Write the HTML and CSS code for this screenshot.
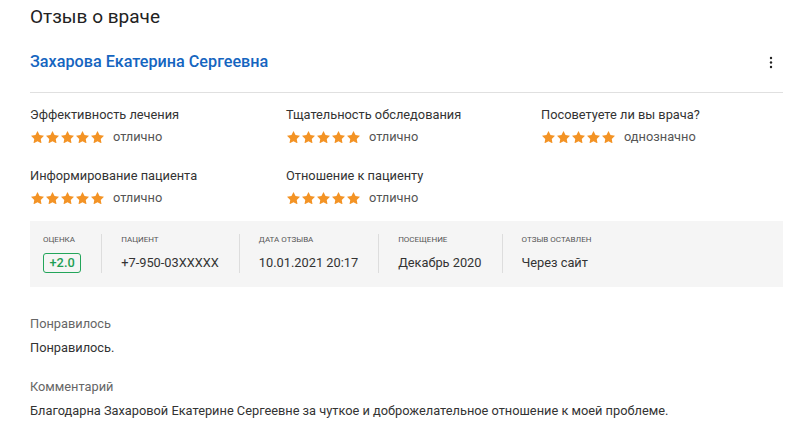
FILE: index.html
```html
<!DOCTYPE html>
<html lang="ru">
<head>
<meta charset="utf-8">
<link rel="stylesheet" href="styles.css">
</head>
<body>
<div class="page">
  <h1 class="title">Отзыв о враче</h1>
  <div class="doctor-row">
    <a class="doctor-name" href="#">Захарова Екатерина Сергеевна</a>
    <span class="kebab">
      <svg width="4" height="14" viewBox="0 0 4 14"><circle cx="2" cy="2" r="1.2" fill="#222"/><circle cx="2" cy="6.5" r="1.2" fill="#222"/><circle cx="2" cy="11" r="1.2" fill="#222"/></svg>
    </span>
  </div>
  <div class="divider"></div>

  <div class="ratings">
    <div class="rating">
      <div class="rating-label">Эффективность лечения</div>
      <div class="rating-value"><span class="stars">
        <svg class="star" viewBox="2 2 20 19"><path d="M12 2l3.09 6.26L22 9.27l-5 4.87 1.18 6.88L12 17.77l-6.18 3.25L7 14.14 2 9.27l6.91-1.01L12 2z"/></svg><svg class="star" viewBox="2 2 20 19"><path d="M12 2l3.09 6.26L22 9.27l-5 4.87 1.18 6.88L12 17.77l-6.18 3.25L7 14.14 2 9.27l6.91-1.01L12 2z"/></svg><svg class="star" viewBox="2 2 20 19"><path d="M12 2l3.09 6.26L22 9.27l-5 4.87 1.18 6.88L12 17.77l-6.18 3.25L7 14.14 2 9.27l6.91-1.01L12 2z"/></svg><svg class="star" viewBox="2 2 20 19"><path d="M12 2l3.09 6.26L22 9.27l-5 4.87 1.18 6.88L12 17.77l-6.18 3.25L7 14.14 2 9.27l6.91-1.01L12 2z"/></svg><svg class="star" viewBox="2 2 20 19"><path d="M12 2l3.09 6.26L22 9.27l-5 4.87 1.18 6.88L12 17.77l-6.18 3.25L7 14.14 2 9.27l6.91-1.01L12 2z"/></svg>
      </span><span class="rating-text">отлично</span></div>
    </div>
    <div class="rating">
      <div class="rating-label">Тщательность обследования</div>
      <div class="rating-value"><span class="stars">
        <svg class="star" viewBox="2 2 20 19"><path d="M12 2l3.09 6.26L22 9.27l-5 4.87 1.18 6.88L12 17.77l-6.18 3.25L7 14.14 2 9.27l6.91-1.01L12 2z"/></svg><svg class="star" viewBox="2 2 20 19"><path d="M12 2l3.09 6.26L22 9.27l-5 4.87 1.18 6.88L12 17.77l-6.18 3.25L7 14.14 2 9.27l6.91-1.01L12 2z"/></svg><svg class="star" viewBox="2 2 20 19"><path d="M12 2l3.09 6.26L22 9.27l-5 4.87 1.18 6.88L12 17.77l-6.18 3.25L7 14.14 2 9.27l6.91-1.01L12 2z"/></svg><svg class="star" viewBox="2 2 20 19"><path d="M12 2l3.09 6.26L22 9.27l-5 4.87 1.18 6.88L12 17.77l-6.18 3.25L7 14.14 2 9.27l6.91-1.01L12 2z"/></svg><svg class="star" viewBox="2 2 20 19"><path d="M12 2l3.09 6.26L22 9.27l-5 4.87 1.18 6.88L12 17.77l-6.18 3.25L7 14.14 2 9.27l6.91-1.01L12 2z"/></svg>
      </span><span class="rating-text">отлично</span></div>
    </div>
    <div class="rating">
      <div class="rating-label">Посоветуете ли вы врача?</div>
      <div class="rating-value"><span class="stars">
        <svg class="star" viewBox="2 2 20 19"><path d="M12 2l3.09 6.26L22 9.27l-5 4.87 1.18 6.88L12 17.77l-6.18 3.25L7 14.14 2 9.27l6.91-1.01L12 2z"/></svg><svg class="star" viewBox="2 2 20 19"><path d="M12 2l3.09 6.26L22 9.27l-5 4.87 1.18 6.88L12 17.77l-6.18 3.25L7 14.14 2 9.27l6.91-1.01L12 2z"/></svg><svg class="star" viewBox="2 2 20 19"><path d="M12 2l3.09 6.26L22 9.27l-5 4.87 1.18 6.88L12 17.77l-6.18 3.25L7 14.14 2 9.27l6.91-1.01L12 2z"/></svg><svg class="star" viewBox="2 2 20 19"><path d="M12 2l3.09 6.26L22 9.27l-5 4.87 1.18 6.88L12 17.77l-6.18 3.25L7 14.14 2 9.27l6.91-1.01L12 2z"/></svg><svg class="star" viewBox="2 2 20 19"><path d="M12 2l3.09 6.26L22 9.27l-5 4.87 1.18 6.88L12 17.77l-6.18 3.25L7 14.14 2 9.27l6.91-1.01L12 2z"/></svg>
      </span><span class="rating-text">однозначно</span></div>
    </div>
    <div class="rating">
      <div class="rating-label">Информирование пациента</div>
      <div class="rating-value"><span class="stars">
        <svg class="star" viewBox="2 2 20 19"><path d="M12 2l3.09 6.26L22 9.27l-5 4.87 1.18 6.88L12 17.77l-6.18 3.25L7 14.14 2 9.27l6.91-1.01L12 2z"/></svg><svg class="star" viewBox="2 2 20 19"><path d="M12 2l3.09 6.26L22 9.27l-5 4.87 1.18 6.88L12 17.77l-6.18 3.25L7 14.14 2 9.27l6.91-1.01L12 2z"/></svg><svg class="star" viewBox="2 2 20 19"><path d="M12 2l3.09 6.26L22 9.27l-5 4.87 1.18 6.88L12 17.77l-6.18 3.25L7 14.14 2 9.27l6.91-1.01L12 2z"/></svg><svg class="star" viewBox="2 2 20 19"><path d="M12 2l3.09 6.26L22 9.27l-5 4.87 1.18 6.88L12 17.77l-6.18 3.25L7 14.14 2 9.27l6.91-1.01L12 2z"/></svg><svg class="star" viewBox="2 2 20 19"><path d="M12 2l3.09 6.26L22 9.27l-5 4.87 1.18 6.88L12 17.77l-6.18 3.25L7 14.14 2 9.27l6.91-1.01L12 2z"/></svg>
      </span><span class="rating-text">отлично</span></div>
    </div>
    <div class="rating">
      <div class="rating-label">Отношение к пациенту</div>
      <div class="rating-value"><span class="stars">
        <svg class="star" viewBox="2 2 20 19"><path d="M12 2l3.09 6.26L22 9.27l-5 4.87 1.18 6.88L12 17.77l-6.18 3.25L7 14.14 2 9.27l6.91-1.01L12 2z"/></svg><svg class="star" viewBox="2 2 20 19"><path d="M12 2l3.09 6.26L22 9.27l-5 4.87 1.18 6.88L12 17.77l-6.18 3.25L7 14.14 2 9.27l6.91-1.01L12 2z"/></svg><svg class="star" viewBox="2 2 20 19"><path d="M12 2l3.09 6.26L22 9.27l-5 4.87 1.18 6.88L12 17.77l-6.18 3.25L7 14.14 2 9.27l6.91-1.01L12 2z"/></svg><svg class="star" viewBox="2 2 20 19"><path d="M12 2l3.09 6.26L22 9.27l-5 4.87 1.18 6.88L12 17.77l-6.18 3.25L7 14.14 2 9.27l6.91-1.01L12 2z"/></svg><svg class="star" viewBox="2 2 20 19"><path d="M12 2l3.09 6.26L22 9.27l-5 4.87 1.18 6.88L12 17.77l-6.18 3.25L7 14.14 2 9.27l6.91-1.01L12 2z"/></svg>
      </span><span class="rating-text">отлично</span></div>
    </div>
  </div>

  <div class="info">
    <div class="cell">
      <div class="cell-label">Оценка</div>
      <div class="cell-value"><span class="badge">+2.0</span></div>
    </div>
    <div class="cell">
      <div class="cell-label">Пациент</div>
      <div class="cell-value">+7-950-03XXXXX</div>
    </div>
    <div class="cell">
      <div class="cell-label">Дата отзыва</div>
      <div class="cell-value">10.01.2021 20:17</div>
    </div>
    <div class="cell">
      <div class="cell-label">Посещение</div>
      <div class="cell-value">Декабрь 2020</div>
    </div>
    <div class="cell">
      <div class="cell-label">Отзыв оставлен</div>
      <div class="cell-value">Через сайт</div>
    </div>
  </div>

  <div class="section">
    <div class="section-label">Понравилось</div>
    <div class="section-text">Понравилось.</div>
  </div>
  <div class="section">
    <div class="section-label">Комментарий</div>
    <div class="section-text">Благодарна Захаровой Екатерине Сергеевне за чуткое и доброжелательное отношение к моей проблеме.</div>
  </div>
</div>
</body>
</html>
```

FILE: styles.css
```css
* { box-sizing: border-box; }
html, body { margin: 0; padding: 0; background: #fff; }
body {
  font-family: Roboto, "Liberation Sans", Arial, sans-serif;
  color: #333;
}
.page {
  width: 800px;
  padding: 5px 17px 0 30px;
}
.title {
  margin: 0;
  font-size: 19px;
  line-height: 24px;
  font-weight: 400;
  color: #222;
}
.doctor-row {
  margin-top: 23px;
  height: 20px;
  display: flex;
  align-items: center;
  justify-content: space-between;
}
.doctor-name {
  font-size: 16.2px;
  line-height: 20px;
  font-weight: 500;
  color: #1565c0;
  text-decoration: none;
}
.kebab {
  display: flex;
  width: 4px;
  margin-right: 10px;
  margin-top: 1px;
}
.divider {
  margin-top: 20px;
  height: 1px;
  background: #e0e0e0;
}
.ratings {
  margin-top: 14px;
  display: grid;
  grid-template-columns: 256px 255px 1fr;
  row-gap: 23px;
}
.rating-label {
  font-size: 12.8px;
  line-height: 16px;
  color: #333;
}
.rating-value {
  margin-top: 6px;
  height: 16px;
  display: flex;
  align-items: center;
}
.stars {
  display: flex;
  gap: 2px;
  margin-left: 1px;
}
.star {
  width: 13px;
  height: 12.4px;
  fill: #f39325;
  display: block;
}
.rating-text {
  margin-left: 9px;
  font-size: 12.8px;
  line-height: 16px;
  color: #555;
}
.info {
  margin-top: 15px;
  background: #f5f5f5;
  padding: 13px 0 14px 13px;
  display: flex;
}
.cell {
  padding: 0 20px 0 19px;
  border-left: 1px solid #ddd;
}
.cell:first-child {
  padding-left: 0;
  border-left: none;
}
.cell-label {
  font-size: 8px;
  line-height: 12px;
  text-transform: uppercase;
  color: #555;
}
.cell-value {
  margin-top: 7px;
  font-size: 12.8px;
  line-height: 20px;
  color: #333;
  white-space: nowrap;
}
.badge {
  display: inline-block;
  height: 20px;
  line-height: 18px;
  padding: 0 5.5px;
  border: 1px solid #23a55a;
  border-radius: 3px;
  color: #1e9e54;
  font-weight: 500;
  vertical-align: top;
}
.section { margin-top: 29px; }
.section + .section { margin-top: 23px; }
.section-label {
  font-size: 12.8px;
  line-height: 16px;
  color: #666;
}
.section-text {
  margin-top: 8px;
  font-size: 12.8px;
  line-height: 16px;
  color: #333;
}
```
